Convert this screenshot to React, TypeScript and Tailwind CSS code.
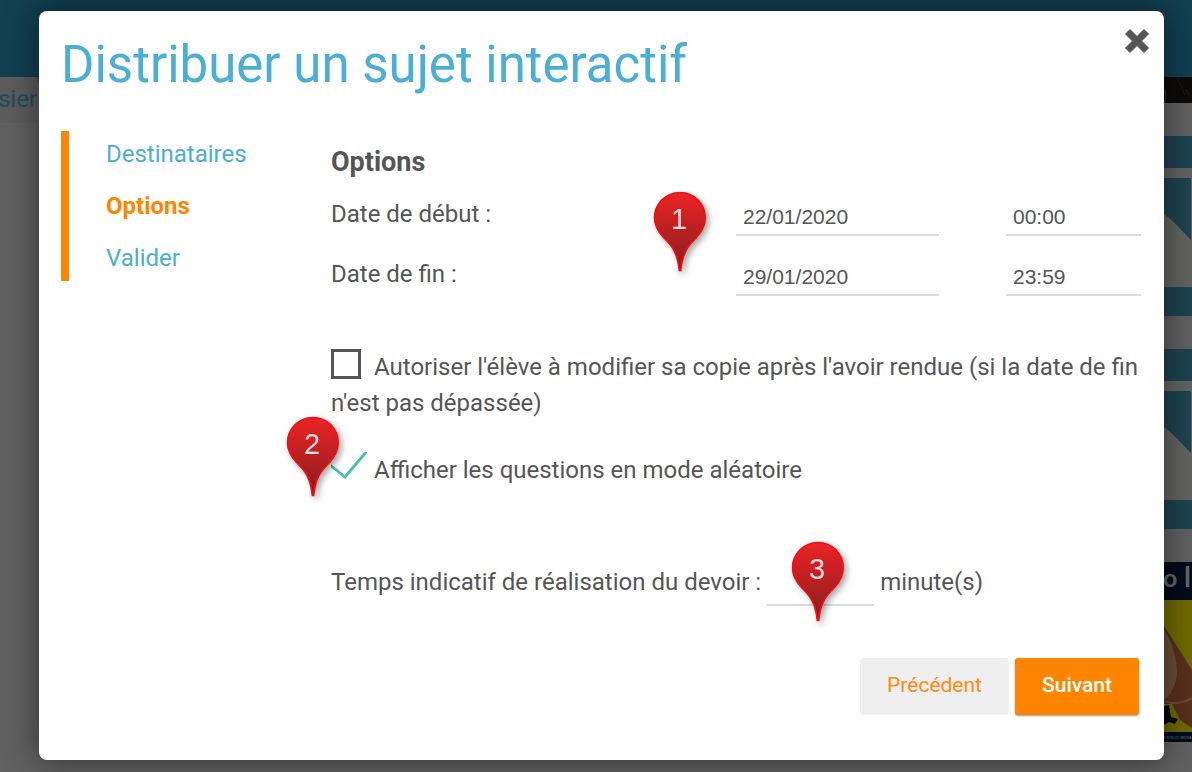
import type { ReactNode } from 'react';

function Pin({ n, className }: { n: number; className: string }) {
  const fill = `pin-fill-${n}`;
  return (
    <svg
      aria-hidden="true"
      viewBox="0 0 54 82"
      className={`pointer-events-none absolute h-[82px] w-[54px] overflow-visible drop-shadow-[3px_3px_3px_rgba(0,0,0,0.35)] ${className}`}
    >
      <defs>
        <linearGradient id={fill} x1="0" y1="0" x2="0" y2="1">
          <stop offset="0" stopColor="#ea2426" />
          <stop offset="0.3" stopColor="#cf2022" />
          <stop offset="0.7" stopColor="#a32022" />
          <stop offset="1" stopColor="#8c1517" />
        </linearGradient>
      </defs>
      <path
        d="M27 1.5C12.800 1.500 1.500 12.800 1.500 27C1.500 35 5.500 41 10.500 46.500C19 55 24.500 61 26.300 79.500H27.700C29.500 61 35 55 43.500 46.500C48.500 41 52.200 35 52.200 27C52.200 12.800 41.200 1.500 27 1.500Z"
        fill={`url(#${fill})`}
        stroke="#fb0a0d"
        strokeWidth="1.600"
      />
      <text x="26" y="38" textAnchor="middle" fontFamily="Liberation Sans, sans-serif" fontSize="29" fill="#fbdcdc">
        {n}
      </text>
    </svg>
  );
}

function Thumbnail() {
  return (
    <div className="pt-[33px]">
      <div className="h-8 bg-[#1d4250]" />
      <svg viewBox="0 0 28 119" preserveAspectRatio="none" className="block h-[119px] w-full">
        <rect width="28" height="119" fill="#626361" />
        <path d="M0 10H26L27 11V72C18 63 10 53 0 46Z" fill="#1d4250" />
      </svg>
      <div className="h-[29px] bg-[#1d4250]" />
    </div>
  );
}

function Poster() {
  return (
    <svg viewBox="0 0 28 180" preserveAspectRatio="none" className="mt-[33px] block h-[180px] w-full">
      <rect width="28" height="180" fill="#020b1a" />
      <rect y="38" width="28" height="132" fill="#6f6a02" />
      <path d="M0 64C8 76 18 92 28 108V166L16 158L8 142H0Z" fill="#57301c" />
      <path d="M0 68C8 80 13 96 13 112C12 124 6 134 0 138Z" fill="#665037" />
      <path d="M0 139C9 143 20 141 28 136" stroke="#784a32" strokeWidth="2" fill="none" />
      <path d="M0 144L5 143L7 155L14 157L11 162L5 160L0 163Z" fill="#050b10" />
      <text x="-1" y="25" fontFamily="Lato, sans-serif" fontSize="25" fontWeight="700" fill="#606563">
        o
      </text>
      <text x="20" y="25" fontFamily="Lato, sans-serif" fontSize="28" fontWeight="700" fill="#606563">
        l
      </text>
      <text x="0" y="177" fontFamily="Liberation Sans, sans-serif" fontSize="3" fill="#777">
        CTION CO-ORDINA
      </text>
    </svg>
  );
}

function Field({ id, value, label, className }: { id: string; value: string; label: string; className: string }) {
  return (
    <input
      id={id}
      aria-label={label}
      defaultValue={value}
      className={`h-10 w-full min-w-0 border-b-2 border-[#dbdbdb] bg-transparent px-[7px] pt-1 font-['Liberation_Sans',sans-serif] text-[21px] outline-none ${className}`}
    />
  );
}

function DateRow({ id, label, date, time }: { id: string; label: string; date: string; time: string }) {
  return (
    <div className="grid h-[60px] grid-cols-12">
      <label htmlFor={id} className="col-span-6 leading-9">
        {label}
      </label>
      <Field id={id} value={date} label={label} className="col-span-3" />
      <Field id={`${id}-heure`} value={time} label={`Heure, ${label}`} className="col-span-2 col-start-11" />
    </div>
  );
}

function Step({ active, children }: { active?: boolean; children: ReactNode }) {
  return (
    <li>
      <a
        href="#"
        aria-current={active ? 'step' : undefined}
        className={active ? 'font-bold text-[#ff8500]' : 'text-[#4bafd5]'}
      >
        {children}
      </a>
    </li>
  );
}

export default function App() {
  return (
    <div className="relative min-h-screen overflow-hidden bg-[#606060] font-[Roboto,sans-serif] text-2xl text-[#555]">
      <div aria-hidden="true" className="absolute inset-0">
        <div className="h-[77px] bg-[#123f52] shadow-[0_2px_6px_rgba(0,0,0,0.4)]" />
        <div className="flex justify-between">
          <div className="flex h-[46px] w-[37px] justify-end bg-[#5c5c5c] leading-[44px] text-[#1e4d5e]">sier</div>
          <div className="w-7">
            <svg viewBox="0 0 28 26" className="block h-[26px] w-full">
              <rect width="28" height="26" fill="#0d0b09" />
              <path d="M0 12C3 17 2 22 0 26" stroke="#194343" fill="none" />
              <path d="M13 0L21 18M22 12L26 20" stroke="#141c17" fill="none" />
            </svg>
            <Thumbnail />
            <Thumbnail />
            <Poster />
          </div>
        </div>
      </div>

      <main className="relative pt-[11px] pr-7 pb-3 pl-[39px]">
        <section
          role="dialog"
          aria-labelledby="dialog-title"
          className="relative rounded-lg bg-white pt-[22px] pr-[23px] pb-[45px] pl-[22px] shadow-[0_0_32px_rgba(0,0,0,0.5)]"
        >
          <header className="flex items-start justify-between">
            <h1 id="dialog-title" className="text-[51px] leading-[64px] text-[#4bafd5]">
              Distribuer un sujet interactif
            </h1>
            <button type="button" aria-label="Fermer" className="-mt-1 -mr-2">
              <svg viewBox="0 0 24 24" className="block size-6">
                <path
                  d="M5 0.500L12 7.500L19 0.500L23.500 5L16.500 12L23.500 19L19 23.500L12 16.500L5 23.500L0.500 19L7.500 12L0.500 5Z"
                  fill="#555"
                  stroke="#555"
                  strokeLinejoin="round"
                />
              </svg>
            </button>
          </header>

          <div className="mt-[34px] grid grid-cols-4 items-start">
            <nav className="border-l-8 border-[#ff8500] pl-[37px]">
              <ul className="flex h-[150px] flex-col justify-between py-1 leading-[38px]">
                <Step>Destinataires</Step>
                <Step active>Options</Step>
                <Step>Valider</Step>
              </ul>
            </nav>

            <form className="col-span-3 pt-[13px]" onSubmit={(e) => e.preventDefault()}>
              <h2 className="text-[27px] leading-9 font-bold">Options</h2>
              <div className="mt-4">
                <DateRow id="debut" label="Date de début :" date="22/01/2020" time="00:00" />
                <DateRow id="fin" label="Date de fin :" date="29/01/2020" time="23:59" />
              </div>

              <label className="mt-[33px] block leading-9">
                <input
                  type="checkbox"
                  className="mr-[13px] inline-block size-[30px] appearance-none border-3 border-[#555] align-[-4px]"
                />
                Autoriser l'élève à modifier sa copie après l'avoir rendue (si la date de fin n'est pas dépassée)
              </label>

              <label className="mt-[31px] flex items-start gap-[7px] leading-9">
                <span className="grid h-7 w-9 overflow-hidden">
                  <input type="checkbox" defaultChecked className="col-start-1 row-start-1 appearance-none" />
                  <svg viewBox="0 0 36 28" className="col-start-1 row-start-1 block h-7 w-9">
                    <path d="M-1 13L14 25L36 -1" fill="none" stroke="#46bfaf" strokeWidth="2.800" />
                  </svg>
                </span>
                Afficher les questions en mode aléatoire
              </label>

              <div className="mt-[76px] flex items-end leading-9">
                <label htmlFor="duree" className="pb-[6px]">
                  Temps indicatif de réalisation du devoir :
                </label>
                <input
                  id="duree"
                  className="mr-[6px] ml-[6px] h-10 w-[107px] border-b-2 border-[#dbdbdb] bg-transparent outline-none"
                />
                <span className="pb-[6px]">minute(s)</span>
              </div>

              <div className="mt-[52px] flex justify-end gap-[6px] pr-[2px] text-[21px] font-medium">
                <button type="button" className="h-[57px] rounded-[3px] bg-[#efefef] px-[27px] pb-1 font-normal text-[#ff8b12]">
                  Précédent
                </button>
                <button
                  type="submit"
                  className="h-[57px] rounded-[3px] bg-[#ff8500] px-[27px] pb-1 text-white shadow-[0_1px_2px_rgba(0,0,0,0.4)]"
                >
                  Suivant
                </button>
              </div>
            </form>
          </div>

          <Pin n={1} className="top-[180px] left-[614px]" />
          <Pin n={2} className="top-[405px] left-[247px]" />
          <Pin n={3} className="top-[530px] left-[752px]" />
        </section>
      </main>
    </div>
  );
}
